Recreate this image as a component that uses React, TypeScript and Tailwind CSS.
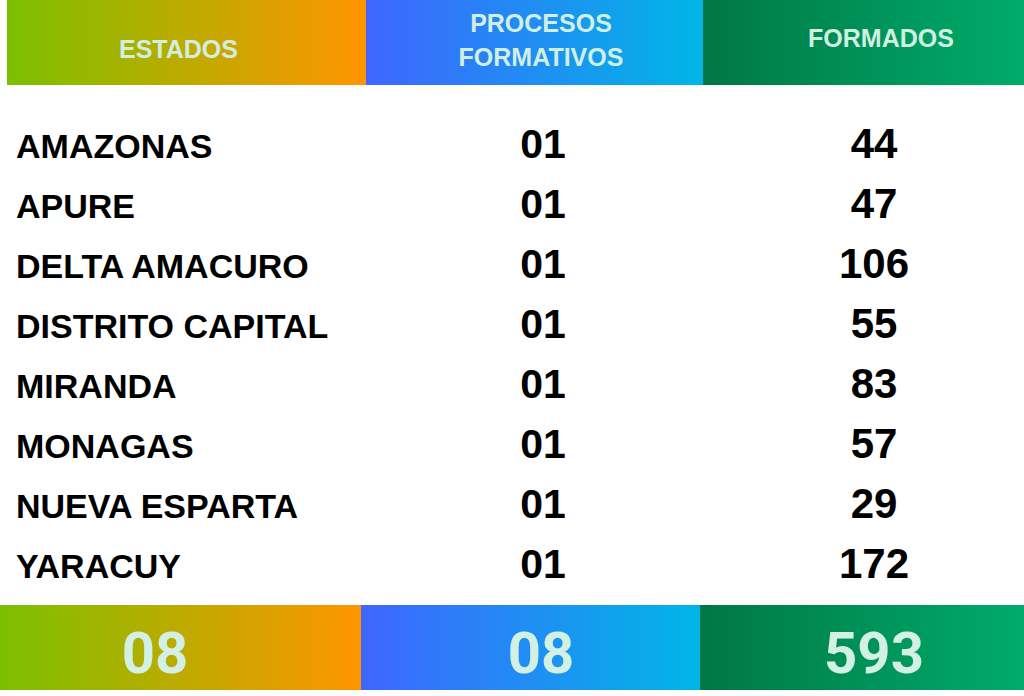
const rows = [
  { estado: "AMAZONAS", procesos: "01", formados: "44" },
  { estado: "APURE", procesos: "01", formados: "47" },
  { estado: "DELTA AMACURO", procesos: "01", formados: "106" },
  { estado: "DISTRITO CAPITAL", procesos: "01", formados: "55" },
  { estado: "MIRANDA", procesos: "01", formados: "83" },
  { estado: "MONAGAS", procesos: "01", formados: "57" },
  { estado: "NUEVA ESPARTA", procesos: "01", formados: "29" },
  { estado: "YARACUY", procesos: "01", formados: "172" },
];

export default function App() {
  return (
    <div className="w-[1024px] h-[696px] bg-white overflow-hidden font-['Liberation_Sans',Arial,sans-serif]">
      {/* Encabezado */}
      <div className="flex h-[85px] ml-[7px] text-[25px] font-bold leading-[34px] text-[#d0efe1]">
        <div className="w-[359px] flex items-center justify-center pt-[13px] pr-[16px] bg-[linear-gradient(to_right,#7bc000,#ff9500)]">
          ESTADOS
        </div>
        <div className="w-[337px] flex items-center justify-center pb-[5px] pl-[13px] text-center bg-[linear-gradient(to_right,#3f66ff,#00b6e6)]">
          PROCESOS
          <br />
          FORMATIVOS
        </div>
        <div className="flex-1 flex items-center justify-center pb-[9px] pl-[35px] bg-[linear-gradient(to_right,#007744,#00ab6b)]">
          FORMADOS
        </div>
      </div>

      {/* Filas */}
      <div className="mt-[38px] flex flex-col">
        {rows.map((r) => (
          <div key={r.estado} className="h-[60px] flex items-baseline font-bold text-black leading-none">
            <div className="w-[443px] pl-[16px] text-[34px]">{r.estado}</div>
            <div className="w-[200px] text-center text-[41px]">{r.procesos}</div>
            <div className="w-[200px] ml-[131px] text-center text-[42px]">{r.formados}</div>
          </div>
        ))}
      </div>

      {/* Totales */}
      <div className="mt-[2px] flex h-[85px] font-['Roboto',sans-serif] font-bold text-[58px] leading-none text-[#d2f0e4]">
        <div className="w-[361px] flex items-center justify-center pt-[10px] pr-[51px] bg-[linear-gradient(to_right,#7bc000,#ff9500)]">
          08
        </div>
        <div className="w-[339px] flex items-center justify-center pt-[10px] pl-[21px] bg-[linear-gradient(to_right,#3f66ff,#00b6e6)]">
          08
        </div>
        <div className="flex-1 flex items-center justify-center pt-[10px] pl-[24px] bg-[linear-gradient(to_right,#007744,#00ab6b)]">
          593
        </div>
      </div>
    </div>
  );
}
